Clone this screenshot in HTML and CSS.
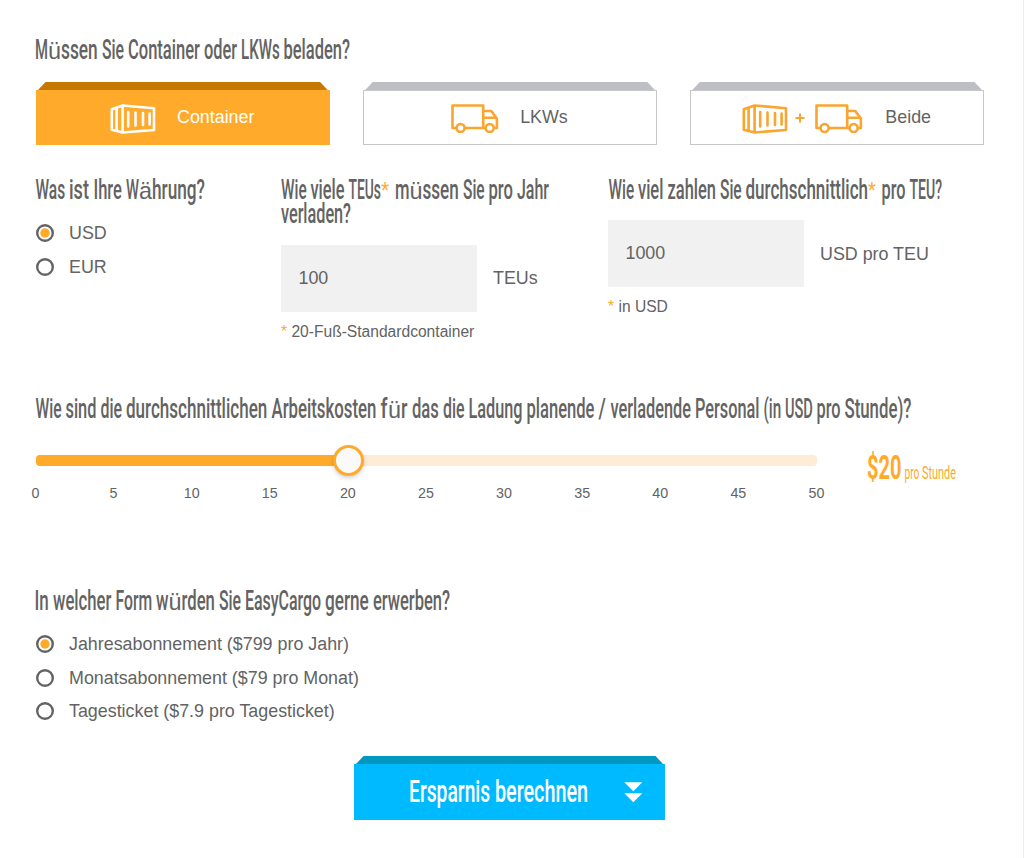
FILE: index.html
```html
<!DOCTYPE html>
<html lang="de">
<head>
<meta charset="utf-8">
<title>EasyCargo</title>
<link rel="stylesheet" href="styles.css">
</head>
<body>
<svg class="defs" aria-hidden="true">
  <symbol id="container" viewBox="0 0 46 30">
    <path d="M1.8 5.2 12.6 1.5 44 4.2V26L12.6 28.5 1.8 25.8ZM12.6 1.5v27M6.6 4.5v22" fill="none" stroke="currentColor" stroke-width="2.6" stroke-linejoin="round"/>
    <path d="M18.2 8v14.500M25.500 8.500v13M33 9v12M39.600 9.500v11" fill="none" stroke="currentColor" stroke-width="2.6" stroke-linecap="round"/>
  </symbol>
  <symbol id="truck" viewBox="0 0 48 30">
    <path d="M5 25H1.500V2.500H32.200V25H14M32.200 8H40.300L45.900 15.500V25H43M32.200 14.800H45.500M32.200 25H34" fill="none" stroke="currentColor" stroke-width="2.600" stroke-linejoin="round"/>
    <circle cx="9.600" cy="25" r="4" fill="none" stroke="currentColor" stroke-width="2.600"/>
    <circle cx="38.700" cy="25" r="4" fill="none" stroke="currentColor" stroke-width="2.600"/>
  </symbol>
  <symbol id="radio" viewBox="0 0 18 18">
    <circle cx="9" cy="9" r="7.800" fill="none" stroke="#636363" stroke-width="2.400"/>
  </symbol>
  <symbol id="radio-on" viewBox="0 0 18 18">
    <circle cx="9" cy="9" r="7.800" fill="none" stroke="#636363" stroke-width="2.400"/>
    <circle cx="9" cy="9" r="4.700" fill="#ffaa2b"/>
  </symbol>
</svg>
<main class="calculator">
  <svg class="title" width="948" height="36" viewBox="36 30 948 36"><text y="59"><tspan x="35" textLength="13" lengthAdjust="spacingAndGlyphs">M</tspan><tspan class="umlaut" x="48" textLength="13" lengthAdjust="spacingAndGlyphs">ü</tspan><tspan x="61" textLength="41" lengthAdjust="spacingAndGlyphs">ssen </tspan><tspan x="102" textLength="26" lengthAdjust="spacingAndGlyphs">Sie </tspan><tspan x="128" textLength="76" lengthAdjust="spacingAndGlyphs">Container </tspan><tspan x="204" textLength="37" lengthAdjust="spacingAndGlyphs">oder </tspan><tspan x="241" textLength="42.500" lengthAdjust="spacingAndGlyphs">LKWs </tspan><tspan x="283.500" textLength="66.500" lengthAdjust="spacingAndGlyphs">beladen?</tspan></text></svg>

  <div class="cards">
    <button class="card card-active">
      <span class="lid"></span>
      <span class="face pad-container"><svg class="icon-container"><use href="#container"/></svg><span class="card-label">Container</span></span>
    </button>
    <button class="card">
      <span class="lid"></span>
      <span class="face pad-truck"><svg class="icon-truck"><use href="#truck"/></svg><span class="card-label">LKWs</span></span>
    </button>
    <button class="card">
      <span class="lid"></span>
      <span class="face pad-both"><svg class="icon-container"><use href="#container"/></svg><svg class="plus" viewBox="0 0 10 10"><path d="M5 .5v9M.5 5h9" stroke="currentColor" stroke-width="2"/></svg><svg class="icon-truck"><use href="#truck"/></svg><span class="card-label">Beide</span></span>
    </button>
  </div>

  <div class="questions">
    <section>
      <svg class="title" width="230" height="41.500" viewBox="36 175 230 41.500"><text y="198.700"><tspan x="35.500" textLength="33.500" lengthAdjust="spacingAndGlyphs">Was </tspan><tspan x="69" textLength="24.500" lengthAdjust="spacingAndGlyphs">ist </tspan><tspan x="93.500" textLength="32.500" lengthAdjust="spacingAndGlyphs">Ihre </tspan><tspan x="126" textLength="13" lengthAdjust="spacingAndGlyphs">W</tspan><tspan class="umlaut" x="139" textLength="13" lengthAdjust="spacingAndGlyphs">ä</tspan><tspan x="152" textLength="53" lengthAdjust="spacingAndGlyphs">hrung?</tspan></text></svg>
      <label class="option"><svg class="radio"><use href="#radio-on"/></svg>USD</label>
      <label class="option"><svg class="radio"><use href="#radio"/></svg>EUR</label>
    </section>
    <section>
      <svg class="title" width="300" height="69.500" viewBox="281 175 300 69.500"><text y="198.700"><tspan x="281" textLength="29.500" lengthAdjust="spacingAndGlyphs">Wie </tspan><tspan x="310.500" textLength="38" lengthAdjust="spacingAndGlyphs">viele </tspan><tspan x="348.500" textLength="32.500" lengthAdjust="spacingAndGlyphs">TEUs</tspan><tspan class="star" x="381" textLength="14" lengthAdjust="spacingAndGlyphs">* </tspan><tspan x="395" textLength="14.500" lengthAdjust="spacingAndGlyphs">m</tspan><tspan class="umlaut" x="409.500" textLength="13" lengthAdjust="spacingAndGlyphs">ü</tspan><tspan x="422.500" textLength="40.500" lengthAdjust="spacingAndGlyphs">ssen </tspan><tspan x="463" textLength="25.500" lengthAdjust="spacingAndGlyphs">Sie </tspan><tspan x="488.500" textLength="28.500" lengthAdjust="spacingAndGlyphs">pro </tspan><tspan x="517" textLength="32" lengthAdjust="spacingAndGlyphs">Jahr</tspan></text><text y="223.300"><tspan x="281" textLength="70" lengthAdjust="spacingAndGlyphs">verladen?</tspan></text></svg>
      <div class="field"><span class="input">100</span><span>TEUs</span></div>
      <p class="note"><span class="note-star">*</span> 20-Fuß-Standardcontainer</p>
    </section>
    <section>
      <svg class="title" width="376" height="45" viewBox="608 175 376 45"><text y="198.700"><tspan x="608.500" textLength="29.500" lengthAdjust="spacingAndGlyphs">Wie </tspan><tspan x="638" textLength="29.500" lengthAdjust="spacingAndGlyphs">viel </tspan><tspan x="667.500" textLength="52.500" lengthAdjust="spacingAndGlyphs">zahlen </tspan><tspan x="720" textLength="25.500" lengthAdjust="spacingAndGlyphs">Sie </tspan><tspan x="745.500" textLength="122.500" lengthAdjust="spacingAndGlyphs">durchschnittlich</tspan><tspan class="star" x="868" textLength="13.500" lengthAdjust="spacingAndGlyphs">* </tspan><tspan x="881.500" textLength="28" lengthAdjust="spacingAndGlyphs">pro </tspan><tspan x="909.500" textLength="32.500" lengthAdjust="spacingAndGlyphs">TEU?</tspan></text></svg>
      <div class="field"><span class="input">1000</span><span>USD pro TEU</span></div>
      <p class="note"><span class="note-star">*</span> in USD</p>
    </section>
  </div>

  <svg class="title" width="948" height="44.500" viewBox="36 394 948 44.500"><text y="417.700"><tspan x="35.500" textLength="30" lengthAdjust="spacingAndGlyphs">Wie </tspan><tspan x="65.500" textLength="35" lengthAdjust="spacingAndGlyphs">sind </tspan><tspan x="100.500" textLength="25.500" lengthAdjust="spacingAndGlyphs">die </tspan><tspan x="126" textLength="145.500" lengthAdjust="spacingAndGlyphs">durchschnittlichen </tspan><tspan x="271.500" textLength="109" lengthAdjust="spacingAndGlyphs">Arbeitskosten </tspan><tspan x="380.500" textLength="7" lengthAdjust="spacingAndGlyphs">f</tspan><tspan class="umlaut" x="388" textLength="13" lengthAdjust="spacingAndGlyphs">ü</tspan><tspan x="401" textLength="11" lengthAdjust="spacingAndGlyphs">r </tspan><tspan x="412" textLength="31" lengthAdjust="spacingAndGlyphs">das </tspan><tspan x="443" textLength="25.500" lengthAdjust="spacingAndGlyphs">die </tspan><tspan x="468.500" textLength="58" lengthAdjust="spacingAndGlyphs">Ladung </tspan><tspan x="526.500" textLength="72" lengthAdjust="spacingAndGlyphs">planende </tspan><tspan x="598.500" textLength="12" lengthAdjust="spacingAndGlyphs">/ </tspan><tspan x="610.500" textLength="84.500" lengthAdjust="spacingAndGlyphs">verladende </tspan><tspan x="695" textLength="68.500" lengthAdjust="spacingAndGlyphs">Personal </tspan><tspan x="763.500" textLength="21.500" lengthAdjust="spacingAndGlyphs">(in </tspan><tspan x="785" textLength="31.500" lengthAdjust="spacingAndGlyphs">USD </tspan><tspan x="816.500" textLength="28" lengthAdjust="spacingAndGlyphs">pro </tspan><tspan x="844.500" textLength="67" lengthAdjust="spacingAndGlyphs">Stunde)?</tspan></text></svg>

  <div class="cost">
    <div class="slider">
      <div class="track"><div class="fill"></div><span class="thumb"></span></div>
      <div class="ticks"><span>0</span><span>5</span><span>10</span><span>15</span><span>20</span><span>25</span><span>30</span><span>35</span><span>40</span><span>45</span><span>50</span></div>
    </div>
    <svg class="title price" width="100" height="40" viewBox="866 448 100 40"><text y="478.700"><tspan class="amount" x="867" textLength="34.500" lengthAdjust="spacingAndGlyphs">$20</tspan></text><text y="478.700"><tspan class="unit" x="904.500" textLength="17.500" lengthAdjust="spacingAndGlyphs">pro </tspan><tspan class="unit" x="922" textLength="34" lengthAdjust="spacingAndGlyphs">Stunde</tspan></text></svg>
  </div>

  <svg class="title" width="948" height="41.500" viewBox="36 586 948 41.500"><text y="609.700"><tspan x="34.500" textLength="18.500" lengthAdjust="spacingAndGlyphs">In </tspan><tspan x="53" textLength="62.500" lengthAdjust="spacingAndGlyphs">welcher </tspan><tspan x="115.500" textLength="40.500" lengthAdjust="spacingAndGlyphs">Form </tspan><tspan x="156" textLength="12.500" lengthAdjust="spacingAndGlyphs">w</tspan><tspan class="umlaut" x="168.500" textLength="13" lengthAdjust="spacingAndGlyphs">ü</tspan><tspan x="181.500" textLength="37.500" lengthAdjust="spacingAndGlyphs">rden </tspan><tspan x="219" textLength="26" lengthAdjust="spacingAndGlyphs">Sie </tspan><tspan x="245" textLength="80" lengthAdjust="spacingAndGlyphs">EasyCargo </tspan><tspan x="325" textLength="48" lengthAdjust="spacingAndGlyphs">gerne </tspan><tspan x="373" textLength="77" lengthAdjust="spacingAndGlyphs">erwerben?</tspan></text></svg>
  <label class="option"><svg class="radio"><use href="#radio-on"/></svg>Jahresabonnement ($799 pro Jahr)</label>
  <label class="option"><svg class="radio"><use href="#radio"/></svg>Monatsabonnement ($79 pro Monat)</label>
  <label class="option"><svg class="radio"><use href="#radio"/></svg>Tagesticket ($7.9 pro Tagesticket)</label>

  <button class="submit">
    <span class="lid"></span>
    <svg class="title submit-face" width="311" height="56" viewBox="354 764.500 311 56"><text y="802"><tspan x="409" textLength="86" lengthAdjust="spacingAndGlyphs">Ersparnis </tspan><tspan x="495" textLength="93" lengthAdjust="spacingAndGlyphs">berechnen</tspan></text><path d="M624.300 782.700h18l-9 9zM624.300 793.700h18l-9 9z" fill="#fff"/></svg>
  </button>
</main>
</body>
</html>
```
FILE: styles.css
```css
* { box-sizing: border-box; }
body {
  margin: 0;
  height: 858px;
  overflow: hidden;
  background: #fff;
  border-right: 1px solid #ececec;
  color: #636363;
  font: 17.88px/20px "Liberation Sans", Arial, sans-serif;
}
button { padding: 0; border: 0; background: none; color: inherit; font: inherit; }
.defs { position: absolute; width: 0; height: 0; }
.calculator { width: 984px; padding: 30px 0 0 36px; }

.title { display: block; overflow: visible; }
.title text { font: 500 27.3px Roboto, "Liberation Sans", sans-serif; fill: #636363; }
.title .umlaut { font: 24px "Liberation Sans", Arial, sans-serif; }
.title .star { font: 23px "Liberation Sans", Arial, sans-serif; fill: #ffaa2b; }

.cards { display: grid; grid-template-columns: repeat(3, 1fr); gap: 33.5px; margin-top: 15.5px; }
.card { display: block; text-align: left; }
.lid { display: block; height: 8.5px; background: #bdbfc5; clip-path: polygon(10px 0, calc(100% - 10px) 0, calc(100% - 2px) 100%, 2px 100%); }
.face { display: flex; align-items: center; height: 55px; border: 1px solid #c6c7cb; }
.card svg { color: #f9a52f; flex: none; }
.card-active .lid { background: #c77800; }
.card-active .face { background: #ffaa2b; border-color: #ffaa2b; color: #fff; }
.card-active svg { color: #fff; }
.icon-container { width: 46px; height: 30px; margin-top: 2px; }
.icon-truck { width: 48px; height: 30px; margin-top: 1px; }
.plus { width: 10px; height: 10px; margin: 1px 10px 0 7px; }
.pad-container { padding-left: 73px; }
.pad-truck { padding-left: 87px; }
.pad-both { padding-left: 51px; }
.card-label { margin: -1px 0 0 21px; }
.pad-both .card-label { margin-left: 22px; }

.questions { display: grid; grid-template-columns: 245px 327px 376px; height: 219px; margin-top: 30px; }
.option { display: flex; align-items: center; height: 33.5px; }
.radio { width: 18px; height: 18px; margin-right: 15px; }
.field { display: flex; align-items: center; gap: 16.5px; }
.input { width: 195.5px; height: 67px; padding-left: 17.5px; background: #f1f1f1; line-height: 67px; }
.note { margin: 10px 0 0; font-size: 15.6px; }
.note-star { color: #ffaa2b; }

.cost { display: flex; height: 147.5px; }
.slider { width: 781px; padding-top: 16.5px; }
.track { position: relative; height: 11px; border-radius: 4px; background: #feecd4; }
.fill { width: 40%; height: 11px; border-radius: 4px 0 0 4px; background: #ffaa2b; }
.thumb { position: absolute; left: 40%; top: 50%; width: 31px; height: 31px; margin: -15.5px; border: 3px solid #ffaa2b; border-radius: 50%; background: #fafafa; box-shadow: 0 2px 4px rgba(0,0,0,.18); }
.ticks { display: flex; justify-content: space-between; margin: 17px -19.5px 0 -20.5px; font-size: 14.3px; }
.ticks span { width: 40px; text-align: center; }
.price { margin: 9px 0 0 49px; }
.price .amount { font-size: 33px; font-weight: 700; fill: #ffaa2b; }
.price .unit { font-size: 17.5px; font-weight: 400; fill: #ffaa2b; }

.submit { display: block; margin: 27.5px 0 0 318px; }
.submit .lid { background: #0098bf; }
.submit-face { background: #00baff; }
.submit-face text { font-size: 31.5px; fill: #fff; }
```
